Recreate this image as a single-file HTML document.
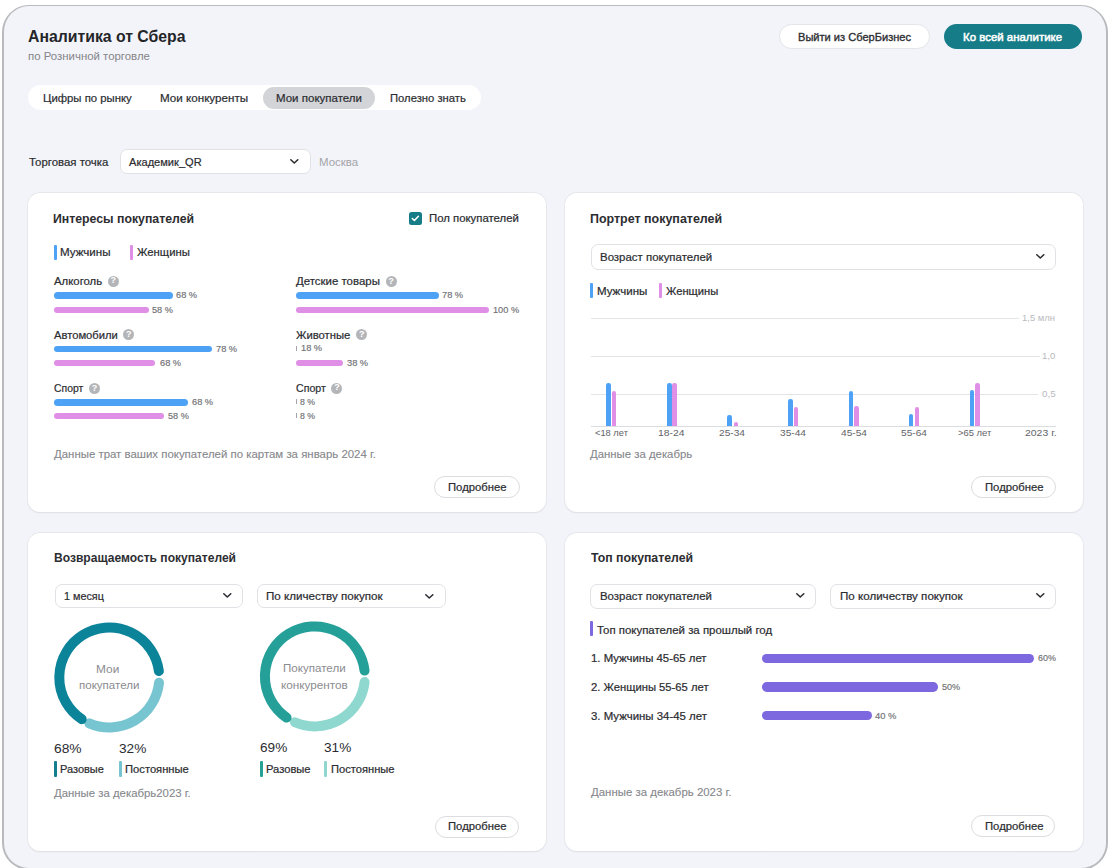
<!DOCTYPE html>
<html><head><meta charset="utf-8">
<style>
*{box-sizing:border-box;margin:0;padding:0}
html,body{width:1110px;height:868px;overflow:hidden;background:#fff;font-family:"Liberation Sans",sans-serif}
.t{position:absolute;white-space:nowrap;line-height:1;font-family:"Liberation Sans",sans-serif}
.s{position:absolute}
#wrap{position:absolute;left:2.4px;top:4.6px;width:1105.6px;height:865px;border:2px solid #b9babe;border-top:1.5px solid #b9babe;border-radius:27px;background:#f3f4f9}
.card{position:absolute;background:#fff;border-radius:12px;box-shadow:0 0 0 0.7px #e3e4e8,0 1px 1.4px rgba(0,0,0,0.11)}
.sel{position:absolute;background:#fff;border:1px solid #e1e2e6;border-radius:7px}
.btn{position:absolute;background:#fff;border:1px solid #dcdde1;border-radius:12px}
.q{position:absolute;width:11px;height:11px;border-radius:50%;background:#b4b5b8}
.q:after{content:"?";position:absolute;left:0;top:0.5px;width:11px;text-align:center;font:bold 9px/9px "Liberation Sans",sans-serif;color:#fff}
.bar{position:absolute;border-radius:4px}
.bl{background:#4ea2f6}.pk{background:#df8fe5}
.vb{position:absolute;width:4.5px;border-radius:2.2px 2.2px 0 0}
.gl{position:absolute;height:1px;background:#e3e4e7}
.lb{position:absolute;width:2.2px;border-radius:1px}
</style></head><body>
<div id="wrap"></div>
<div class="s" style="left:779px;top:24px;width:151.00px;height:25.00px;border-radius:13px;background:#fff;border:1px solid #e4e5e9"></div>
<div class="s" style="left:944px;top:24px;width:138.00px;height:25.00px;border-radius:13px;background:#167c87"></div>
<div class="s" style="left:28px;top:85px;width:453.00px;height:25.00px;border-radius:12.5px;background:#fff"></div>
<div class="s" style="left:263px;top:86.5px;width:112.00px;height:22.00px;border-radius:11px;background:#d3d4d8"></div>
<div class="sel" style="left:119.5px;top:148.5px;width:191.00px;height:25.00px;"></div>
<svg class="s" style="left:289.10px;top:158.00px" width="10.6" height="6.6" viewBox="-1 -1 10.6 6.6"><path d="M0.8 0.8L4.3 3.9999999999999996L7.8 0.8" stroke="#2a2b2f" stroke-width="1.55" fill="none" stroke-linecap="round" stroke-linejoin="round"/></svg>
<div class="card" style="left:28px;top:193px;width:517.50px;height:319.00px;"></div>
<div class="card" style="left:565px;top:193px;width:517.50px;height:319.00px;"></div>
<div class="card" style="left:28px;top:532.5px;width:517.50px;height:318.50px;"></div>
<div class="card" style="left:565px;top:532.5px;width:517.50px;height:318.50px;"></div>
<div class="s" style="left:409px;top:212.3px;width:12.70px;height:12.70px;border-radius:2.5px;background:#167c87"></div>
<svg class="s" style="left:409px;top:212.3px" width="12.7" height="12.7" viewBox="0 0 12.7 12.7"><path d="M3.3 6.5L5.4 8.5L9.4 4.3" stroke="#fff" stroke-width="1.6" fill="none" stroke-linecap="round" stroke-linejoin="round"/></svg>
<div class="lb bl" style="left:54px;top:245px;width:2.60px;height:14.80px;"></div>
<div class="lb pk" style="left:130.2px;top:245px;width:2.60px;height:14.80px;"></div>
<div class="q" style="left:107.7px;top:275.9px;width:11.00px;height:11.00px;"></div>
<div class="q" style="left:123.30000000000001px;top:329.3px;width:11.00px;height:11.00px;"></div>
<div class="q" style="left:89.0px;top:383.0px;width:11.00px;height:11.00px;"></div>
<div class="q" style="left:385.5px;top:276.4px;width:11.00px;height:11.00px;"></div>
<div class="q" style="left:356.3px;top:329.1px;width:11.00px;height:11.00px;"></div>
<div class="q" style="left:331.4px;top:382.7px;width:11.00px;height:11.00px;"></div>
<div class="bar bl" style="left:54px;top:292.25px;width:118.60px;height:6.50px;"></div>
<div class="bar pk" style="left:54px;top:306.55px;width:94.50px;height:6.50px;"></div>
<div class="bar bl" style="left:54px;top:345.75px;width:157.70px;height:6.50px;"></div>
<div class="bar pk" style="left:54px;top:359.95px;width:101.30px;height:6.50px;"></div>
<div class="bar bl" style="left:54px;top:399.05px;width:134.20px;height:6.50px;"></div>
<div class="bar pk" style="left:54px;top:412.75px;width:110.30px;height:6.50px;"></div>
<div class="bar bl" style="left:296px;top:292.05px;width:143.00px;height:6.50px;"></div>
<div class="bar pk" style="left:296px;top:306.55px;width:193.30px;height:6.50px;"></div>
<div class="bar pk" style="left:296px;top:359.75px;width:47.00px;height:6.50px;"></div>
<div class="s" style="left:296.2px;top:345.59999999999997px;width:1.10px;height:5.20px;background:#a3a4a8"></div>
<div class="s" style="left:296.2px;top:399.0px;width:1.10px;height:5.20px;background:#a3a4a8"></div>
<div class="s" style="left:296.2px;top:413.09999999999997px;width:1.10px;height:5.20px;background:#a3a4a8"></div>
<div class="btn" style="left:434.4px;top:476px;width:85.20px;height:22.30px;"></div>
<div class="sel" style="left:590.5px;top:244px;width:465.50px;height:26.00px;"></div>
<svg class="s" style="left:1034.50px;top:253.40px" width="10.6" height="6.6" viewBox="-1 -1 10.6 6.6"><path d="M0.8 0.8L4.3 3.9999999999999996L7.8 0.8" stroke="#2a2b2f" stroke-width="1.55" fill="none" stroke-linecap="round" stroke-linejoin="round"/></svg>
<div class="lb bl" style="left:590.4px;top:283px;width:2.60px;height:15.20px;"></div>
<div class="lb pk" style="left:659.4px;top:283px;width:2.60px;height:15.20px;"></div>
<div class="gl" style="left:590.8px;top:318px;width:428.20px;height:1.00px;"></div>
<div class="gl" style="left:590.8px;top:356px;width:448.90px;height:1.00px;"></div>
<div class="gl" style="left:590.8px;top:394px;width:447.20px;height:1.00px;"></div>
<div class="gl" style="left:590.8px;top:426px;width:465.00px;height:1.00px;background:#dcdde0"></div>
<div class="vb bl" style="left:606.4px;top:382.6px;width:4.50px;height:43.70px;"></div>
<div class="vb pk" style="left:611.7px;top:390.5px;width:4.50px;height:35.80px;"></div>
<div class="vb bl" style="left:667.2px;top:382.6px;width:4.50px;height:43.70px;"></div>
<div class="vb pk" style="left:672.4px;top:382.6px;width:4.50px;height:43.70px;"></div>
<div class="vb bl" style="left:727.3px;top:414.6px;width:4.50px;height:11.70px;"></div>
<div class="vb pk" style="left:733.7px;top:421.8px;width:4.50px;height:4.50px;"></div>
<div class="vb bl" style="left:788px;top:398.9px;width:4.50px;height:27.40px;"></div>
<div class="vb pk" style="left:793.7px;top:406.7px;width:4.50px;height:19.60px;"></div>
<div class="vb bl" style="left:848.5px;top:390.5px;width:4.50px;height:35.80px;"></div>
<div class="vb pk" style="left:854px;top:406.3px;width:4.50px;height:20.00px;"></div>
<div class="vb bl" style="left:908.8px;top:414.2px;width:4.50px;height:12.10px;"></div>
<div class="vb pk" style="left:914.7px;top:406.7px;width:4.50px;height:19.60px;"></div>
<div class="vb bl" style="left:969.7px;top:390.2px;width:4.50px;height:36.10px;"></div>
<div class="vb pk" style="left:975.3px;top:383px;width:4.50px;height:43.30px;"></div>
<div class="btn" style="left:971.3px;top:476px;width:84.70px;height:22.30px;"></div>
<div class="sel" style="left:54.5px;top:584px;width:188.20px;height:24.20px;"></div>
<svg class="s" style="left:221.70px;top:592.30px" width="10.6" height="6.6" viewBox="-1 -1 10.6 6.6"><path d="M0.8 0.8L4.3 3.9999999999999996L7.8 0.8" stroke="#2a2b2f" stroke-width="1.55" fill="none" stroke-linecap="round" stroke-linejoin="round"/></svg>
<div class="sel" style="left:256.7px;top:583.8px;width:188.90px;height:24.50px;"></div>
<svg class="s" style="left:424.10px;top:592.50px" width="10.6" height="6.6" viewBox="-1 -1 10.6 6.6"><path d="M0.8 0.8L4.3 3.9999999999999996L7.8 0.8" stroke="#2a2b2f" stroke-width="1.55" fill="none" stroke-linecap="round" stroke-linejoin="round"/></svg>
<svg class="s" style="left:0;top:0" width="1110" height="868"><path d="M159.03 682.73A50 50 0 0 1 89.36 723.35" stroke="#78c5d2" stroke-width="10" fill="none" stroke-linecap="round"/><path d="M81.70 719.19A50 50 0 1 1 158.88 671.06" stroke="#0b8399" stroke-width="10" fill="none" stroke-linecap="round"/><path d="M364.58 682.06A50 50 0 0 1 294.96 722.25" stroke="#8fd8cf" stroke-width="10" fill="none" stroke-linecap="round"/><path d="M286.58 717.61A50 50 0 1 1 364.56 670.57" stroke="#25a099" stroke-width="10" fill="none" stroke-linecap="round"/></svg>
<div class="lb" style="left:54px;top:761.4px;width:3.00px;height:15.30px;background:#137e8e"></div>
<div class="lb" style="left:119px;top:761.4px;width:3.00px;height:15.30px;background:#77c4d1"></div>
<div class="lb" style="left:260px;top:761.4px;width:3.00px;height:15.30px;background:#27a096"></div>
<div class="lb" style="left:324.3px;top:761.4px;width:3.00px;height:15.30px;background:#90d6d0"></div>
<div class="btn" style="left:434.5px;top:815.6px;width:84.70px;height:22.00px;"></div>
<div class="sel" style="left:590.3px;top:583.5px;width:226.00px;height:25.30px;"></div>
<svg class="s" style="left:795.40px;top:592.30px" width="10.6" height="6.6" viewBox="-1 -1 10.6 6.6"><path d="M0.8 0.8L4.3 3.9999999999999996L7.8 0.8" stroke="#2a2b2f" stroke-width="1.55" fill="none" stroke-linecap="round" stroke-linejoin="round"/></svg>
<div class="sel" style="left:830.1px;top:583.5px;width:225.50px;height:25.30px;"></div>
<svg class="s" style="left:1034.70px;top:592.30px" width="10.6" height="6.6" viewBox="-1 -1 10.6 6.6"><path d="M0.8 0.8L4.3 3.9999999999999996L7.8 0.8" stroke="#2a2b2f" stroke-width="1.55" fill="none" stroke-linecap="round" stroke-linejoin="round"/></svg>
<div class="lb" style="left:590.3px;top:621px;width:2.70px;height:15.30px;background:#7e68e0"></div>
<div class="bar" style="left:762px;top:653.55px;width:272.00px;height:9.50px;background:#7e68e0;border-radius:4.75px"></div>
<div class="bar" style="left:762px;top:682.15px;width:176.00px;height:9.50px;background:#7e68e0;border-radius:4.75px"></div>
<div class="bar" style="left:762px;top:710.95px;width:109.60px;height:9.50px;background:#7e68e0;border-radius:4.75px"></div>
<div class="btn" style="left:971.3px;top:815.3px;width:84.20px;height:21.50px;"></div>
<div class="t" style="left:28.30px;top:29.40px;font-size:16px;font-weight:bold;color:#242529;transform:scaleX(0.9869);transform-origin:0 0">Аналитика от Сбера</div>
<div class="t" style="left:28.40px;top:52.00px;font-size:10px;font-weight:normal;color:#838489;transform:scaleX(1.1411);transform-origin:0 0">по Розничной торговле</div>
<div class="t" style="left:798.20px;top:31.73px;font-size:11.5px;font-weight:normal;color:#2e2f33;transform:scaleX(0.9627);transform-origin:0 0;-webkit-text-stroke:0.35px #2e2f33">Выйти из СберБизнес</div>
<div class="t" style="left:963.10px;top:31.73px;font-size:11.5px;font-weight:normal;color:#ffffff;transform:scaleX(0.9950);transform-origin:0 0;-webkit-text-stroke:0.5px #ffffff">Ко всей аналитике</div>
<div class="t" style="left:42.70px;top:93.25px;font-size:11px;font-weight:normal;color:#2b2c30;transform:scaleX(1.0314);transform-origin:0 0;-webkit-text-stroke:0.2px #2b2c30">Цифры по рынку</div>
<div class="t" style="left:159.50px;top:93.25px;font-size:11px;font-weight:normal;color:#2b2c30;transform:scaleX(1.0578);transform-origin:0 0;-webkit-text-stroke:0.2px #2b2c30">Мои конкуренты</div>
<div class="t" style="left:276.20px;top:93.25px;font-size:11px;font-weight:normal;color:#2b2c30;transform:scaleX(1.0463);transform-origin:0 0;-webkit-text-stroke:0.2px #2b2c30">Мои покупатели</div>
<div class="t" style="left:390.10px;top:93.25px;font-size:11px;font-weight:normal;color:#2b2c30;transform:scaleX(1.0230);transform-origin:0 0;-webkit-text-stroke:0.2px #2b2c30">Полезно знать</div>
<div class="t" style="left:28.60px;top:157.25px;font-size:11px;font-weight:normal;color:#2b2c30;transform:scaleX(1.0377);transform-origin:0 0;-webkit-text-stroke:0.2px #2b2c30">Торговая точка</div>
<div class="t" style="left:128.50px;top:157.25px;font-size:11px;font-weight:normal;color:#2b2c30;transform:scaleX(1.0069);transform-origin:0 0;-webkit-text-stroke:0.2px #2b2c30">Академик_QR</div>
<div class="t" style="left:319.46px;top:157.25px;font-size:11px;font-weight:normal;color:#a3a4a8;transform:scaleX(1.0405);transform-origin:0 0">Москва</div>
<div class="t" style="left:52.92px;top:212.68px;font-size:12.5px;font-weight:bold;color:#2c2d31;transform:scaleX(0.9831);transform-origin:0 0">Интересы покупателей</div>
<div class="t" style="left:428.70px;top:213.38px;font-size:10.5px;font-weight:normal;color:#2b2c30;transform:scaleX(1.0819);transform-origin:0 0;-webkit-text-stroke:0.2px #2b2c30">Пол покупателей</div>
<div class="t" style="left:60.10px;top:246.85px;font-size:11px;font-weight:normal;color:#2b2c30;transform:scaleX(1.0521);transform-origin:0 0;-webkit-text-stroke:0.2px #2b2c30">Мужчины</div>
<div class="t" style="left:136.50px;top:246.85px;font-size:11px;font-weight:normal;color:#2b2c30;transform:scaleX(1.0294);transform-origin:0 0;-webkit-text-stroke:0.2px #2b2c30">Женщины</div>
<div class="t" style="left:54.00px;top:276.27px;font-size:10.5px;font-weight:normal;color:#2b2c30;transform:scaleX(1.0822);transform-origin:0 0;-webkit-text-stroke:0.2px #2b2c30">Алкоголь</div>
<div class="t" style="left:54.00px;top:329.57px;font-size:10.5px;font-weight:normal;color:#2b2c30;transform:scaleX(1.0667);transform-origin:0 0;-webkit-text-stroke:0.2px #2b2c30">Автомобили</div>
<div class="t" style="left:54.00px;top:382.88px;font-size:10.5px;font-weight:normal;color:#2b2c30;transform:scaleX(0.9900);transform-origin:0 0;-webkit-text-stroke:0.2px #2b2c30">Спорт</div>
<div class="t" style="left:296.20px;top:276.27px;font-size:10.5px;font-weight:normal;color:#2b2c30;transform:scaleX(1.0896);transform-origin:0 0;-webkit-text-stroke:0.2px #2b2c30">Детские товары</div>
<div class="t" style="left:296.20px;top:329.57px;font-size:10.5px;font-weight:normal;color:#2b2c30;transform:scaleX(1.0745);transform-origin:0 0;-webkit-text-stroke:0.2px #2b2c30">Животные</div>
<div class="t" style="left:296.20px;top:382.88px;font-size:10.5px;font-weight:normal;color:#2b2c30;transform:scaleX(1.0100);transform-origin:0 0;-webkit-text-stroke:0.2px #2b2c30">Спорт</div>
<div class="t" style="left:175.90px;top:291.27px;font-size:8.5px;font-weight:normal;color:#707175;transform:scaleX(1.0895);transform-origin:0 0;-webkit-text-stroke:0.15px #707175">68 %</div>
<div class="t" style="left:152.00px;top:305.57px;font-size:8.5px;font-weight:normal;color:#707175;transform:scaleX(1.0789);transform-origin:0 0;-webkit-text-stroke:0.15px #707175">58 %</div>
<div class="t" style="left:216.00px;top:344.77px;font-size:8.5px;font-weight:normal;color:#707175;transform:scaleX(1.0895);transform-origin:0 0;-webkit-text-stroke:0.15px #707175">78 %</div>
<div class="t" style="left:159.80px;top:358.77px;font-size:8.5px;font-weight:normal;color:#707175;transform:scaleX(1.0895);transform-origin:0 0;-webkit-text-stroke:0.15px #707175">68 %</div>
<div class="t" style="left:191.80px;top:398.07px;font-size:8.5px;font-weight:normal;color:#707175;transform:scaleX(1.0895);transform-origin:0 0;-webkit-text-stroke:0.15px #707175">68 %</div>
<div class="t" style="left:168.00px;top:411.77px;font-size:8.5px;font-weight:normal;color:#707175;transform:scaleX(1.0789);transform-origin:0 0;-webkit-text-stroke:0.15px #707175">58 %</div>
<div class="t" style="left:442.40px;top:291.07px;font-size:8.5px;font-weight:normal;color:#707175;transform:scaleX(1.0895);transform-origin:0 0;-webkit-text-stroke:0.15px #707175">78 %</div>
<div class="t" style="left:493.00px;top:305.57px;font-size:8.5px;font-weight:normal;color:#707175;transform:scaleX(1.0833);transform-origin:0 0;-webkit-text-stroke:0.15px #707175">100 %</div>
<div class="t" style="left:300.60px;top:343.97px;font-size:8.5px;font-weight:normal;color:#707175;transform:scaleX(1.0895);transform-origin:0 0;-webkit-text-stroke:0.15px #707175">18 %</div>
<div class="t" style="left:347.00px;top:358.77px;font-size:8.5px;font-weight:normal;color:#707175;transform:scaleX(1.0895);transform-origin:0 0;-webkit-text-stroke:0.15px #707175">38 %</div>
<div class="t" style="left:300.10px;top:398.38px;font-size:8.5px;font-weight:normal;color:#707175;transform:scaleX(1.0267);transform-origin:0 0;-webkit-text-stroke:0.15px #707175">8 %</div>
<div class="t" style="left:300.10px;top:412.47px;font-size:8.5px;font-weight:normal;color:#707175;transform:scaleX(1.0267);transform-origin:0 0;-webkit-text-stroke:0.15px #707175">8 %</div>
<div class="t" style="left:54.20px;top:449.07px;font-size:10.5px;font-weight:normal;color:#86878c;transform:scaleX(1.0875);transform-origin:0 0;-webkit-text-stroke:0.1px #86878c">Данные трат ваших покупателей по картам за январь 2024 г.</div>
<div class="t" style="left:448.00px;top:482.07px;font-size:10.5px;font-weight:normal;color:#2b2c30;transform:scaleX(1.0741);transform-origin:0 0;-webkit-text-stroke:0.2px #2b2c30">Подробнее</div>
<div class="t" style="left:589.80px;top:212.68px;font-size:12.5px;font-weight:bold;color:#2c2d31;transform:scaleX(0.9969);transform-origin:0 0">Портрет покупателей</div>
<div class="t" style="left:600.20px;top:252.38px;font-size:10.5px;font-weight:normal;color:#2b2c30;transform:scaleX(1.0893);transform-origin:0 0;-webkit-text-stroke:0.2px #2b2c30">Возраст покупателей</div>
<div class="t" style="left:597.10px;top:286.18px;font-size:10.5px;font-weight:normal;color:#2b2c30;transform:scaleX(1.0978);transform-origin:0 0;-webkit-text-stroke:0.2px #2b2c30">Мужчины</div>
<div class="t" style="left:665.60px;top:286.18px;font-size:10.5px;font-weight:normal;color:#2b2c30;transform:scaleX(1.0653);transform-origin:0 0;-webkit-text-stroke:0.2px #2b2c30">Женщины</div>
<div class="t" style="left:1022.40px;top:314.47px;font-size:8.5px;font-weight:normal;color:#b9babe;transform:scaleX(1.1133);transform-origin:0 0">1,5 млн</div>
<div class="t" style="left:1042.30px;top:351.88px;font-size:8.5px;font-weight:normal;color:#b9babe;transform:scaleX(1.1250);transform-origin:0 0">1,0</div>
<div class="t" style="left:1042.00px;top:389.88px;font-size:8.5px;font-weight:normal;color:#b9babe;transform:scaleX(1.1500);transform-origin:0 0">0,5</div>
<div class="t" style="left:594.70px;top:428.12px;font-size:9.5px;font-weight:normal;color:#626367;transform:scaleX(0.9794);transform-origin:0 0">&lt;18 лет</div>
<div class="t" style="left:658.21px;top:428.12px;font-size:9.5px;font-weight:normal;color:#626367;transform:scaleX(1.0913);transform-origin:0 0">18-24</div>
<div class="t" style="left:719.40px;top:428.12px;font-size:9.5px;font-weight:normal;color:#626367;transform:scaleX(1.0708);transform-origin:0 0">25-34</div>
<div class="t" style="left:780.00px;top:428.12px;font-size:9.5px;font-weight:normal;color:#626367;transform:scaleX(1.0667);transform-origin:0 0">35-44</div>
<div class="t" style="left:840.70px;top:428.12px;font-size:9.5px;font-weight:normal;color:#626367;transform:scaleX(1.0667);transform-origin:0 0">45-54</div>
<div class="t" style="left:901.40px;top:428.12px;font-size:9.5px;font-weight:normal;color:#626367;transform:scaleX(1.0667);transform-origin:0 0">55-64</div>
<div class="t" style="left:957.60px;top:428.12px;font-size:9.5px;font-weight:normal;color:#626367;transform:scaleX(0.9912);transform-origin:0 0">&gt;65 лет</div>
<div class="t" style="left:1025.00px;top:428.12px;font-size:9.5px;font-weight:normal;color:#626367;transform:scaleX(1.1000);transform-origin:0 0">2023 г.</div>
<div class="t" style="left:590.20px;top:448.77px;font-size:10.5px;font-weight:normal;color:#86878c;transform:scaleX(1.0830);transform-origin:0 0;-webkit-text-stroke:0.1px #86878c">Данные за декабрь</div>
<div class="t" style="left:985.00px;top:482.07px;font-size:10.5px;font-weight:normal;color:#2b2c30;transform:scaleX(1.0741);transform-origin:0 0;-webkit-text-stroke:0.2px #2b2c30">Подробнее</div>
<div class="t" style="left:53.53px;top:552.17px;font-size:12.5px;font-weight:bold;color:#2c2d31;transform:scaleX(0.9652);transform-origin:0 0">Возвращаемость покупателей</div>
<div class="t" style="left:63.50px;top:591.38px;font-size:10.5px;font-weight:normal;color:#2b2c30;transform:scaleX(1.0282);transform-origin:0 0;-webkit-text-stroke:0.2px #2b2c30">1 месяц</div>
<div class="t" style="left:266.10px;top:591.38px;font-size:10.5px;font-weight:normal;color:#2b2c30;transform:scaleX(1.1047);transform-origin:0 0;-webkit-text-stroke:0.2px #2b2c30">По кличеству покупок</div>
<div class="t" style="left:95.57px;top:664.08px;font-size:10.5px;font-weight:normal;color:#8b8c90;transform:scaleX(1.1316);transform-origin:0 0">Мои</div>
<div class="t" style="left:79.00px;top:680.28px;font-size:10.5px;font-weight:normal;color:#8b8c90;transform:scaleX(1.0982);transform-origin:0 0">покупатели</div>
<div class="t" style="left:283.00px;top:663.38px;font-size:10.5px;font-weight:normal;color:#8b8c90;transform:scaleX(1.1018);transform-origin:0 0">Покупатели</div>
<div class="t" style="left:281.40px;top:679.58px;font-size:10.5px;font-weight:normal;color:#8b8c90;transform:scaleX(1.1183);transform-origin:0 0">конкурентов</div>
<div class="t" style="left:53.90px;top:743.17px;font-size:12.5px;font-weight:normal;color:#2b2c30;transform:scaleX(1.1040);transform-origin:0 0">68%</div>
<div class="t" style="left:118.50px;top:743.17px;font-size:12.5px;font-weight:normal;color:#2b2c30;transform:scaleX(1.0920);transform-origin:0 0">32%</div>
<div class="t" style="left:259.90px;top:741.88px;font-size:12.5px;font-weight:normal;color:#2b2c30;transform:scaleX(1.0880);transform-origin:0 0">69%</div>
<div class="t" style="left:324.30px;top:741.88px;font-size:12.5px;font-weight:normal;color:#2b2c30;transform:scaleX(1.0880);transform-origin:0 0">31%</div>
<div class="t" style="left:60.00px;top:764.28px;font-size:10.5px;font-weight:normal;color:#2b2c30;transform:scaleX(1.0476);transform-origin:0 0;-webkit-text-stroke:0.2px #2b2c30">Разовые</div>
<div class="t" style="left:125.00px;top:764.28px;font-size:10.5px;font-weight:normal;color:#2b2c30;transform:scaleX(1.0667);transform-origin:0 0;-webkit-text-stroke:0.2px #2b2c30">Постоянные</div>
<div class="t" style="left:266.00px;top:764.28px;font-size:10.5px;font-weight:normal;color:#2b2c30;transform:scaleX(1.0643);transform-origin:0 0;-webkit-text-stroke:0.2px #2b2c30">Разовые</div>
<div class="t" style="left:331.20px;top:764.28px;font-size:10.5px;font-weight:normal;color:#2b2c30;transform:scaleX(1.0617);transform-origin:0 0;-webkit-text-stroke:0.2px #2b2c30">Постоянные</div>
<div class="t" style="left:54.00px;top:787.88px;font-size:10.5px;font-weight:normal;color:#86878c;transform:scaleX(1.0833);transform-origin:0 0;-webkit-text-stroke:0.1px #86878c">Данные за декабрь2023 г.</div>
<div class="t" style="left:448.00px;top:821.08px;font-size:10.5px;font-weight:normal;color:#2b2c30;transform:scaleX(1.0741);transform-origin:0 0;-webkit-text-stroke:0.2px #2b2c30">Подробнее</div>
<div class="t" style="left:590.90px;top:552.27px;font-size:12.5px;font-weight:bold;color:#2c2d31;transform:scaleX(0.9825);transform-origin:0 0">Топ покупателей</div>
<div class="t" style="left:600.10px;top:591.38px;font-size:10.5px;font-weight:normal;color:#2b2c30;transform:scaleX(1.0864);transform-origin:0 0;-webkit-text-stroke:0.2px #2b2c30">Возраст покупателей</div>
<div class="t" style="left:840.00px;top:591.38px;font-size:10.5px;font-weight:normal;color:#2b2c30;transform:scaleX(1.1036);transform-origin:0 0;-webkit-text-stroke:0.2px #2b2c30">По количеству покупок</div>
<div class="t" style="left:597.10px;top:624.88px;font-size:10.5px;font-weight:normal;color:#2b2c30;transform:scaleX(1.0882);transform-origin:0 0;-webkit-text-stroke:0.2px #2b2c30">Топ покупателей за прошлый год</div>
<div class="t" style="left:591.00px;top:653.28px;font-size:10.5px;font-weight:normal;color:#2b2c30;transform:scaleX(1.0841);transform-origin:0 0;-webkit-text-stroke:0.2px #2b2c30">1. Мужчины 45-65 лет</div>
<div class="t" style="left:591.00px;top:682.08px;font-size:10.5px;font-weight:normal;color:#2b2c30;transform:scaleX(1.0700);transform-origin:0 0;-webkit-text-stroke:0.2px #2b2c30">2. Женщины 55-65 лет</div>
<div class="t" style="left:591.00px;top:710.58px;font-size:10.5px;font-weight:normal;color:#2b2c30;transform:scaleX(1.0879);transform-origin:0 0;-webkit-text-stroke:0.2px #2b2c30">3. Мужчины 34-45 лет</div>
<div class="t" style="left:1037.70px;top:653.88px;font-size:8.5px;font-weight:normal;color:#707175;transform:scaleX(1.0529);transform-origin:0 0;-webkit-text-stroke:0.15px #707175">60%</div>
<div class="t" style="left:941.70px;top:682.88px;font-size:8.5px;font-weight:normal;color:#707175;transform:scaleX(1.0706);transform-origin:0 0;-webkit-text-stroke:0.15px #707175">50%</div>
<div class="t" style="left:875.40px;top:711.57px;font-size:8.5px;font-weight:normal;color:#707175;transform:scaleX(1.1053);transform-origin:0 0;-webkit-text-stroke:0.15px #707175">40 %</div>
<div class="t" style="left:590.70px;top:786.88px;font-size:10.5px;font-weight:normal;color:#86878c;transform:scaleX(1.0883);transform-origin:0 0;-webkit-text-stroke:0.1px #86878c">Данные за декабрь 2023 г.</div>
<div class="t" style="left:985.00px;top:821.08px;font-size:10.5px;font-weight:normal;color:#2b2c30;transform:scaleX(1.0741);transform-origin:0 0;-webkit-text-stroke:0.2px #2b2c30">Подробнее</div>
</body></html>
